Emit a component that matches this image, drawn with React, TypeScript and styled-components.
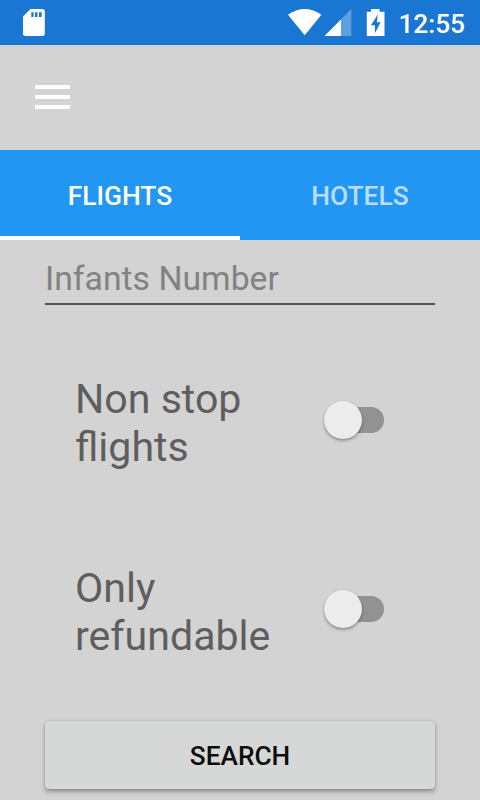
import React from "react";
import styled, { createGlobalStyle } from "styled-components";

const GlobalStyle = createGlobalStyle`
  * { box-sizing: border-box; }
  html, body { margin: 0; padding: 0; overflow: hidden; background: #d3d3d3; }
  button, input { font: inherit; }
`;

const Screen = styled.div`
  display: flex;
  flex-direction: column;
  width: 480px;
  height: 800px;
  overflow: hidden;
  background: #d3d3d3;
  font-family: Roboto, "Liberation Sans", sans-serif;
`;

const StatusBar = styled.header`
  display: flex;
  flex: none;
  justify-content: space-between;
  height: 45px;
  padding: 0 15px 0 23px;
  background: #1976d2;
`;

const StatusGroup = styled.div`
  display: flex;
`;

const Clock = styled.time`
  margin-left: 12px;
  color: #fff;
  font-size: 26.25px;
  font-weight: 500;
  line-height: 48px;
`;

const Toolbar = styled.div`
  flex: none;
  height: 105px;
  padding: 40px 35px;
`;

const MenuButton = styled.button`
  display: flex;
  flex-direction: column;
  gap: 6px;
  width: 35px;
  padding: 0;
  border: 0;
  background: none;
`;

const MenuLine = styled.span`
  height: 4px;
  background: #fff;
`;

const Tabs = styled.nav`
  display: flex;
  flex: none;
  height: 90px;
  background: #2196f3;
`;

const Tab = styled.button<{ $active?: boolean }>`
  flex: 1;
  padding: 6px 0 0;
  border: 0;
  border-bottom: 4px solid ${(p) => (p.$active ? "#fff" : "transparent")};
  background: none;
  color: ${(p) => (p.$active ? "#fff" : "rgba(255, 255, 255, 0.7)")};
  font-size: 26.4px;
  font-weight: 500;
`;

const Form = styled.main`
  display: flex;
  flex-direction: column;
  padding: 0 45px;
`;

const Field = styled.input`
  height: 65px;
  padding: 13px 0 0;
  border: 0;
  border-bottom: 2px solid #545454;
  border-radius: 0;
  outline: 0;
  background: none;
  font-size: 33.75px;
  &::placeholder { color: #828282; opacity: 1; }
`;

const Option = styled.label`
  display: flex;
  align-items: center;
  justify-content: space-between;
  height: 189px;
  padding: 0 51px 0 30px;
`;

const Options = styled.div`
  margin-top: 23px;
`;

const OptionLabel = styled.span`
  width: 205px;
  color: #5e5e5e;
  font-size: 41.1px;
  line-height: 48px;
`;

const Track = styled.span`
  display: flex;
  align-items: center;
  width: 50px;
  height: 26px;
  margin-bottom: 5px;
  border-radius: 13px;
  background: #929292;
`;

const Thumb = styled.span`
  flex: none;
  width: 38px;
  height: 38px;
  margin-left: -10px;
  border-radius: 50%;
  background: #ececec;
  box-shadow: 0 2px 3px rgba(0, 0, 0, 0.3), 0 0 2px rgba(0, 0, 0, 0.12);
`;

const SearchButton = styled.button`
  height: 68px;
  margin-top: 15px;
  padding: 2px 0 0;
  border: 0;
  border-radius: 4px;
  background: #d6d8d7;
  box-shadow: 0 3px 4px rgba(0, 0, 0, 0.3), 0 0 2px rgba(0, 0, 0, 0.2);
  color: #0c0c0c;
  font-size: 26.25px;
  font-weight: 500;
`;

const SdCardIcon = () => (
  <svg width="22" height="45" viewBox="0 0 22 45">
    <path d="M7.5 9H19.3Q21.8 9 21.8 11.5V33.5Q21.8 36 19.3 36H2.5Q0 36 0 33.5V16.5Z" fill="#fff" />
    <path d="M8.3 12.2h2.3v4.8H8.3zM12 12.2h2.5v4.8H12zM16 12.2h2.7v4.8H16z" fill="#1976d2" />
  </svg>
);

const SignalIcons = () => (
  <svg width="98" height="45" viewBox="288 0 98 45">
    <path d="M288 14.7Q304.7 3.3 321.4 14.7L304.7 35.3Z" fill="#fff" />
    <path d="M351.3 9V36H324.5Z" fill="#fff" fillOpacity=".3" />
    <path d="M341 19.4V36H324.5Z" fill="#fff" />
    <path d="M371 9h8.5v2.7h5V36h-17.7V11.7h4.2z" fill="#fff" />
    <path d="M377.8 14.5L370.9 25.3h4V33.2L380.6 22.2h-3.8z" fill="#1976d2" />
  </svg>
);

const options = ["Non stop flights", "Only refundable"];

export default function App() {
  return (
    <>
      <GlobalStyle />
      <Screen>
        <StatusBar>
          <SdCardIcon />
          <StatusGroup>
            <SignalIcons />
            <Clock>12:55</Clock>
          </StatusGroup>
        </StatusBar>
        <Toolbar>
          <MenuButton aria-label="Menu">
            <MenuLine />
            <MenuLine />
            <MenuLine />
          </MenuButton>
        </Toolbar>
        <Tabs>
          <Tab $active>FLIGHTS</Tab>
          <Tab>HOTELS</Tab>
        </Tabs>
        <Form>
          <Field placeholder="Infants Number" />
          <Options>
            {options.map((name) => (
              <Option key={name}>
                <OptionLabel>{name}</OptionLabel>
                <Track role="switch" aria-checked={false}>
                  <Thumb />
                </Track>
              </Option>
            ))}
          </Options>
          <SearchButton>SEARCH</SearchButton>
        </Form>
      </Screen>
    </>
  );
}
